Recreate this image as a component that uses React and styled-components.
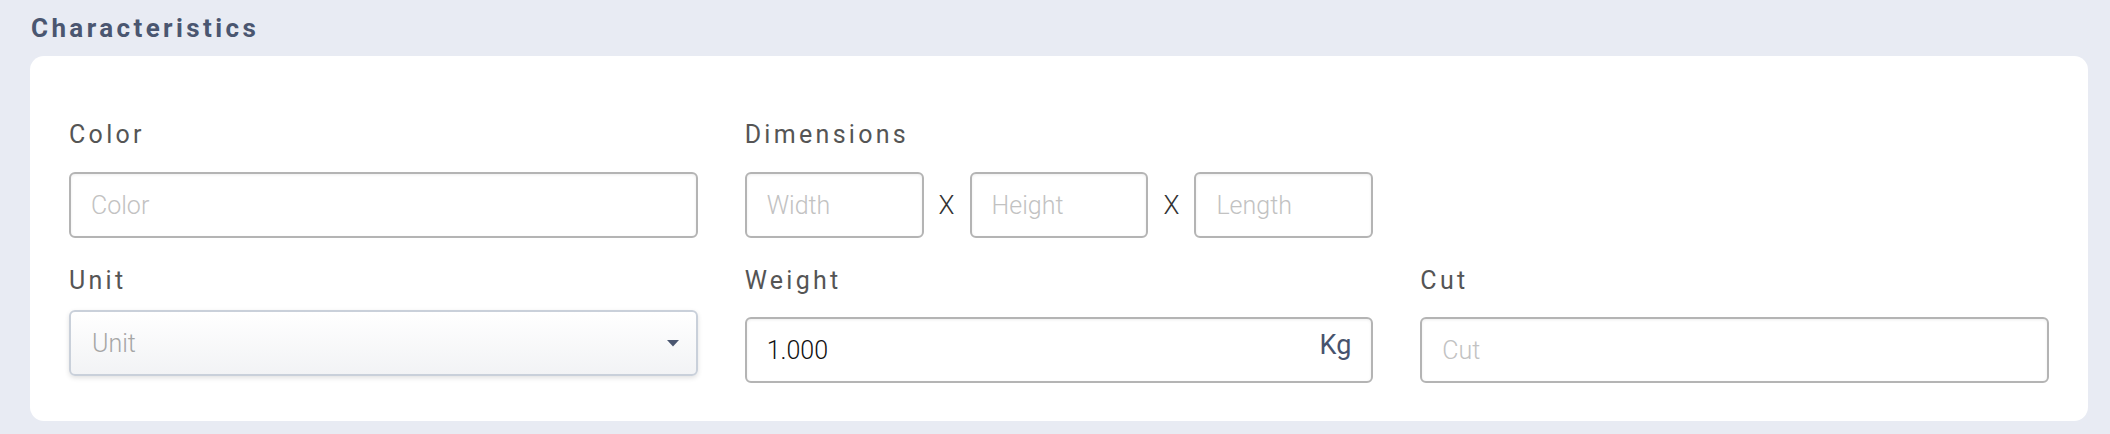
import styled, { createGlobalStyle } from "styled-components";

const GlobalStyle = createGlobalStyle`
  body {
    margin: 0;
    background: #e8ebf3;
    font-family: Roboto, "Liberation Sans", sans-serif;
  }
`;

const Page = styled.div`
  padding: 13px 22px 13px 30px;
`;

const Title = styled.h2`
  margin: 0 0 13px 1px;
  font-size: 26px;
  line-height: 30px;
  font-weight: 700;
  letter-spacing: 3.4px;
  color: #4a5670;
`;

const Card = styled.div`
  background: #fff;
  border-radius: 14px;
  padding: 64px 39px 38px;
`;

const Grid = styled.div`
  display: grid;
  grid-template-columns: repeat(3, minmax(0, 1fr));
  column-gap: 47px;
  row-gap: 28px;
  align-items: start;
`;

const Field = styled.div`
  display: flex;
  flex-direction: column;
`;

const Label = styled.label`
  font-size: 25px;
  line-height: 30px;
  font-weight: 400;
  letter-spacing: 3.3px;
  color: #555;
  margin-bottom: ${(p) => p.$gap || 22}px;
`;

const boxStyle = `
  box-sizing: border-box;
  height: 66px;
  border: 2px solid #b4b4b4;
  border-radius: 6px;
  background: #fff;
  box-shadow: inset 0 1px 3px rgba(0, 0, 0, 0.07);
`;

const TextInput = styled.input`
  ${boxStyle}
  width: 100%;
  padding: 0 20px;
  font-family: Roboto, "Liberation Sans", sans-serif;
  font-size: 25px;
  font-weight: 300;
  color: #222;
  outline: none;
  &::placeholder {
    color: #c2c2c2;
  }
`;

const DimInput = styled(TextInput)`
  flex: 1 1 0;
  min-width: 0;
`;

const DimRow = styled.div`
  display: flex;
  align-items: center;
`;

const Times = styled.span`
  flex: none;
  width: 46px;
  text-align: center;
  font-size: 26px;
  font-weight: 300;
  color: #333;
`;

const InputBox = styled.div`
  ${boxStyle}
  display: flex;
  align-items: center;
  padding: 0 20px;
`;

const BareInput = styled.input`
  flex: 1;
  min-width: 0;
  border: none;
  outline: none;
  padding: 0;
  background: transparent;
  font-family: Roboto, "Liberation Sans", sans-serif;
  font-size: 25px;
  font-weight: 300;
  color: #111;
`;

const Suffix = styled.span`
  font-size: 27px;
  font-weight: 400;
  color: #47536d;
  margin-bottom: 10px;
`;

const Select = styled.div`
  box-sizing: border-box;
  height: 66px;
  display: flex;
  align-items: center;
  justify-content: space-between;
  padding: 0 16px 0 21px;
  border: 2px solid #c9d0da;
  border-radius: 6px;
  background: linear-gradient(#ffffff, #f2f3f5);
  box-shadow: 0 2px 5px rgba(0, 0, 0, 0.12);
  font-size: 25px;
  font-weight: 300;
  color: #a6a6a6;
`;

const Caret = () => (
  <svg width="14" height="8" viewBox="0 0 14 8">
    <path d="M1 1h12L7 7.5z" fill="#4a5670" />
  </svg>
);

export default function App() {
  return (
    <>
      <GlobalStyle />
      <Page>
        <Title>Characteristics</Title>
        <Card>
          <Grid>
            <Field>
              <Label>Color</Label>
              <TextInput placeholder="Color" />
            </Field>
            <Field>
              <Label>Dimensions</Label>
              <DimRow>
                <DimInput placeholder="Width" />
                <Times>X</Times>
                <DimInput placeholder="Height" />
                <Times>X</Times>
                <DimInput placeholder="Length" />
              </DimRow>
            </Field>
            <div />
            <Field>
              <Label $gap={14}>Unit</Label>
              <Select>
                <span>Unit</span>
                <Caret />
              </Select>
            </Field>
            <Field>
              <Label $gap={21}>Weight</Label>
              <InputBox>
                <BareInput defaultValue="1.000" />
                <Suffix>Kg</Suffix>
              </InputBox>
            </Field>
            <Field>
              <Label $gap={21}>Cut</Label>
              <TextInput placeholder="Cut" />
            </Field>
          </Grid>
        </Card>
      </Page>
    </>
  );
}
